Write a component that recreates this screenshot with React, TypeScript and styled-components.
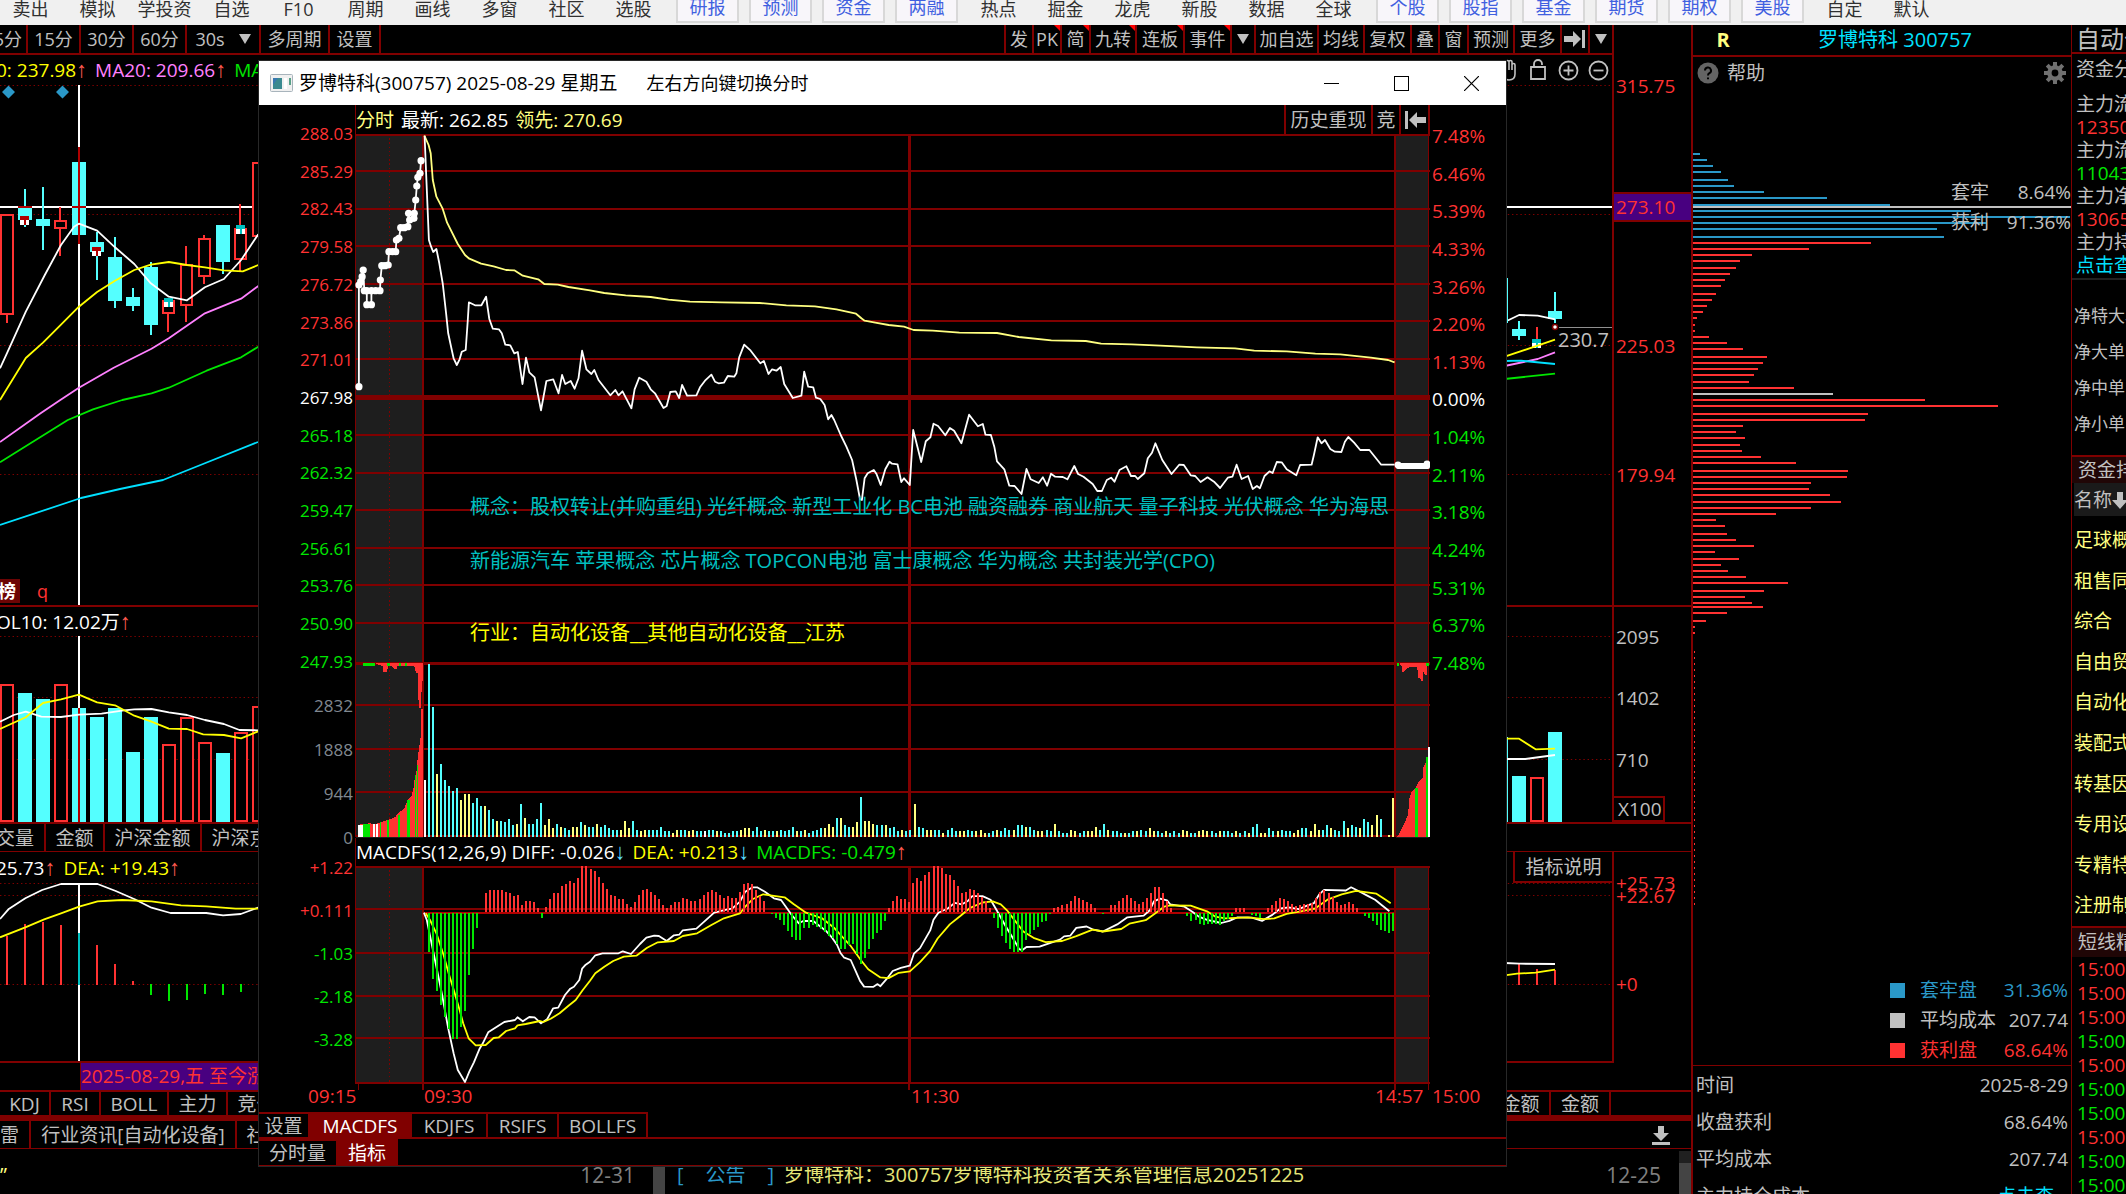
import React from "react";
import styled, { createGlobalStyle, css } from "styled-components";

const LINE = "#800000";
const RED = "#ff3232";
const GREEN = "#00e600";
const CYAN = "#54ffff";
const GRAY = "#c0c0c0";
const BLUE = "#2a98c8";
const CREAM = "#ffff80";

const Global = createGlobalStyle`
  * { box-sizing: border-box; }
  html, body, #root { height: 100%; margin: 0; }
  body {
    background: #000;
    color: ${GRAY};
    overflow: hidden;
    font: 18px/24px "Open Sans", "Noto Sans CJK SC", sans-serif;
  }
  button { font: inherit; color: inherit; background: none; border: 0; padding: 0; margin: 0; white-space: nowrap; }
  svg { display: block; }
`;

/* ---------- geometry helpers ---------- */

type Frame = { x: number; y: number; kx: number; ky: number };
type Rect = { x: number; y: number; w: number; h: number };

const parse = (s: string) => s.trim().split(/\s+/).map((p) => p.split(",").map(Number));
const px = (f: Frame, x: number) => f.x + x * f.kx;
const py = (f: Frame, y: number) => f.y + y * f.ky;
const place = (f: Frame, s: string) =>
  parse(s).map(([x, y]) => `${px(f, x).toFixed(1)},${py(f, y).toFixed(1)}`).join(" ");

const THIRD = 1 / 3;
const daily: Frame = { x: 0, y: 0, kx: 0.3444, ky: THIRD };
const dailyVol: Frame = { x: 0, y: 560, kx: 0.3444, ky: THIRD };
const dailyMacd: Frame = { x: 0, y: 840, kx: 0.4209, ky: THIRD };
const recent: Frame = { x: 1480, y: 0, kx: 0.412, ky: THIRD };
const recentVol: Frame = { x: 1480, y: 480, kx: 0.412, ky: THIRD };
const recentMacd: Frame = { x: 1480, y: 840, kx: 0.412, ky: THIRD };
const morning: Frame = { x: 340, y: 100, kx: 0.3571, ky: THIRD };
const afternoon: Frame = { x: 860, y: 300, kx: 0.3827, ky: THIRD };
const morningInd: Frame = { x: 340, y: 640, kx: 0.3571, ky: THIRD };
const afternoonInd: Frame = { x: 860, y: 640, kx: 0.4082, ky: 0.3533 };

/* ---------- intraday data ---------- */

const AUCTION =
  "53,860 53,555 58,545 62,530 65,510 68,572 75,572 75,614 88,614 88,572 100,572 112,572 113,540 117,497 126,497 135,495 137,455 147,455 156,455 158,420 165,415 170,383 180,383 190,380 192,340 195,360 207,355 208,340 212,300 215,258 218,232 224,220 227,182";
const PRICE_AM =
  "237,108 242,240 249,420 255,440 261,456 270,447 278,490 288,552 297,640 303,700 312,745 318,775 327,795 335,778 341,755 352,750 358,660 361,607 378,616 396,616 409,590 413,620 418,657 428,686 445,688 453,700 463,734 477,736 488,760 498,756 511,852 521,773 530,817 545,832 563,931 578,843 597,838 612,880 622,825 631,852 646,843 657,866 668,835 678,752 690,808 704,822 712,810 724,840 757,886 771,870 780,886 791,874 816,925 825,868 838,833 858,845 870,868 882,880 906,924 915,918 925,876 940,874 950,894 958,855 972,887 998,886 1008,862 1022,842 1040,824 1050,845 1060,850 1075,848 1086,828 1104,830 1110,820 1118,772 1132,734 1150,752 1177,790 1187,783 1200,822 1210,808 1222,812 1234,801 1244,852 1268,894 1292,887 1300,815 1311,860 1325,862 1333,893 1345,897 1357,915 1367,958 1376,945 1384,960 1402,1005 1418,1040 1434,1080 1446,1140 1456,1196";
const PRICE_PM =
  "0,598 5,600 12,535 20,520 36,510 43,522 54,555 66,508 77,485 84,491 98,493 108,546 115,535 130,555 139,390 150,440 160,486 172,424 184,412 192,371 204,378 223,406 235,384 246,392 265,430 285,344 308,379 321,372 328,404 342,405 351,440 358,484 377,508 390,557 404,558 422,582 435,507 446,538 467,549 478,532 489,557 499,521 510,530 530,531 542,538 560,498 570,522 584,530 608,552 620,573 632,573 645,540 656,533 665,545 678,510 696,499 708,528 719,528 726,537 743,520 752,475 763,458 772,430 790,480 814,522 834,494 846,495 864,526 876,528 890,546 908,532 925,545 941,564 961,533 973,530 984,494 997,537 1014,528 1026,567 1037,558 1045,565 1057,528 1070,514 1078,519 1089,486 1102,487 1115,508 1140,526 1150,495 1180,494 1186,465 1196,412 1206,430 1215,420 1229,447 1241,455 1258,456 1267,425 1276,411 1291,428 1307,450 1331,450 1362,494 1397,494";
const LEAD_AM =
  "236,106 248,135 254,160 260,240 270,290 287,325 300,368 330,432 350,465 362,476 395,491 430,499 465,510 488,511 512,527 555,538 572,552 610,554 640,561 700,571 740,579 800,586 870,591 920,599 980,605 1070,607 1175,609 1250,616 1330,619 1390,628 1445,641 1460,655";
const LEAD_PM =
  "0,52 12,62 40,68 75,75 115,80 140,90 190,92 260,98 358,99 415,111 500,121 590,123 630,131 710,133 785,137 880,142 980,145 1030,152 1115,154 1190,161 1255,163 1335,173 1380,180 1397,187";

const VOL_AM = [57, 173, 130, 63, 73, 57, 51, 46, 49, 37, 43, 43, 34, 39, 31, 31, 27, 18, 16, 16, 15, 18, 12, 13, 33, 19, 13, 13, 18, 34, 12, 18, 9, 13, 10, 9, 7, 10, 10, 15, 12, 10, 10, 13, 10, 12, 9, 7, 7, 7, 16, 9, 16, 7, 6, 7, 7, 7, 7, 10, 6, 6, 4, 7, 7, 7, 6, 7, 6, 6, 6, 7, 7, 6, 6, 4, 4, 6, 6, 7, 9, 9, 6, 10, 6, 7, 6, 6, 6, 7, 6, 7, 10, 6, 6, 7, 4, 6, 7, 9, 9, 13, 10, 19, 19, 12, 10, 10, 15, 40];
const VOL_PM = [16, 16, 13, 12, 12, 12, 9, 10, 6, 7, 6, 7, 33, 10, 9, 7, 7, 7, 7, 4, 7, 9, 6, 6, 6, 7, 6, 6, 7, 4, 4, 6, 7, 6, 9, 7, 7, 12, 12, 10, 10, 7, 6, 6, 7, 6, 13, 6, 4, 4, 7, 6, 4, 6, 6, 6, 10, 7, 13, 7, 6, 6, 4, 4, 4, 6, 6, 7, 6, 9, 6, 6, 4, 6, 4, 6, 4, 7, 6, 4, 4, 6, 7, 6, 6, 4, 6, 6, 6, 4, 6, 4, 6, 4, 10, 13, 4, 4, 9, 6, 6, 7, 6, 6, 4, 7, 9, 9, 6, 13, 7, 7, 12, 9, 7, 6, 16, 9, 12, 10, 9, 18, 15, 12, 22, 18, 0, 2, 39];
const TINT_AM = "wccyccccc" + "yyycccyccyccccyc" + "yccccyyycycc" + "yycyccycccccyyyccyyccccccyyccyycc";
const TINT_PM = "yyyccycccyccyccyyccycccyycc";

const MACD_AM = [0, -39, -66, -78, -92, -104, -116, -126, -126, -114, -98, -62, -36, -15, 0, 19, 22, 22, 22, 22, 20, 19, 16, 17, 7, 11, 11, 10, 4, -5, 5, 13, 19, 19, 26, 28, 31, 29, 34, 46, 46, 43, 41, 35, 29, 23, 17, 16, 13, 13, 8, 5, 10, 17, 22, 23, 20, 17, 13, 7, 4, 7, 10, 10, 14, 13, 11, 11, 13, 17, 20, 22, 20, 17, 14, 16, 14, 14, 20, 28, 29, 28, 22, 16, 11, 0, -1, -5, -7, -12, -18, -24, -27, -27, -15, -15, -12, -14, -16, -19, -23, -25, -31, -36, -36, -32, -31, -41, -51];
const MACD_PM = [-45, -36, -26, -20, -17, -8, 4, 11, 16, 13, 13, 10, 29, 34, 31, 37, 40, 46, 46, 44, 38, 37, 32, 26, 19, 20, 23, 22, 19, 15, 11, 4, -5, -15, -23, -30, -36, -39, -39, -39, -27, -21, -17, -14, -9, -8, -1, 4, 5, 7, 8, 11, 16, 14, 12, 10, 8, 4, 0, -1, 0, 7, 7, 11, 14, 17, 14, 11, 8, 10, 14, 19, 25, 25, 19, 11, 4, 0, 0, 0, -3, -8, -7, -11, -12, -11, -11, -11, -12, -8, -6, -3, 4, 4, 4, 0, -2, -3, -5, 0, 4, 7, 11, 14, 13, 11, 8, 6, 7, 8, 8, 9, 14, 20, 22, 19, 15, 10, 7, 8, 10, 8, 4, 0, -3, -5, -8, -12, -17, -18, -20, -18];

const DIFF_AM =
  "235,818 243,840 262,940 285,1060 303,1165 318,1240 330,1290 350,1326 362,1295 375,1267 390,1228 400,1210 415,1177 435,1163 460,1146 490,1140 497,1132 512,1144 530,1131 545,1132 563,1150 580,1138 597,1105 611,1103 630,1065 645,1046 655,1040 670,1020 678,986 688,974 700,965 715,946 735,940 780,940 792,934 815,942 840,912 858,893 880,887 893,888 915,903 935,886 950,884 960,871 998,866 1020,845 1048,818 1085,808 1098,806 1120,785 1135,755 1155,742 1168,742 1190,755 1215,775 1235,780 1245,795 1265,825 1285,850 1297,843 1325,843 1360,872 1378,893 1392,915 1402,940 1412,953 1430,960 1442,988 1456,1022";
const DIFF_PM =
  "0,965 10,981 32,982 43,974 50,980 65,960 80,937 100,928 122,922 132,888 147,872 172,822 180,792 192,772 215,760 232,744 250,748 265,738 275,725 300,725 320,735 335,765 357,810 375,845 390,875 397,878 408,869 440,868 465,858 490,848 500,839 515,837 530,815 555,811 572,820 595,825 630,805 655,785 695,780 710,765 720,740 735,732 752,737 760,748 795,755 815,770 830,783 850,792 885,801 905,795 925,785 960,786 985,795 1010,778 1030,760 1050,757 1075,762 1095,752 1112,745 1125,720 1137,707 1190,709 1203,700 1220,710 1245,725 1262,735 1280,752 1297,768";
const DEA_AM =
  "240,820 252,840 270,880 290,945 305,1003 320,1055 335,1110 345,1150 360,1195 380,1216 408,1215 430,1194 445,1192 465,1173 490,1165 497,1156 520,1152 560,1143 570,1146 590,1136 615,1120 640,1097 660,1080 680,1050 700,1022 715,1000 740,980 765,963 795,950 830,947 860,923 890,907 935,903 960,888 1000,880 1040,855 1075,835 1120,820 1135,800 1155,778 1185,763 1245,772 1270,792 1305,818 1350,835 1385,865 1430,918 1456,956";
const DEA_PM =
  "0,903 20,932 50,955 70,957 95,942 122,938 147,912 172,880 190,845 220,805 245,782 270,758 300,743 325,740 345,748 360,765 380,795 400,825 425,843 455,855 495,852 530,838 570,820 595,825 640,818 660,803 700,793 722,775 745,755 760,751 810,752 850,768 870,783 895,788 950,785 990,790 1015,788 1045,775 1080,768 1115,760 1145,735 1180,720 1215,710 1265,718 1285,733 1300,745";

const PRICES = ["288.03", "285.29", "282.43", "279.58", "276.72", "273.86", "271.01", "267.98", "265.18", "262.32", "259.47", "256.61", "253.76", "250.90", "247.93"];
const PERCENTS = ["7.48%", "6.46%", "5.39%", "4.33%", "3.26%", "2.20%", "1.13%", "0.00%", "1.04%", "2.11%", "3.18%", "4.24%", "5.31%", "6.37%", "7.48%"];
const tone = (i: number) => (i < 7 ? RED : i === 7 ? "#ffffff" : GREEN);

const spread = (n: number, from: number, to: number) => (i: number) => Math.round(from + ((to - from) * i) / (n - 1));
const amX = (n: number) => spread(n, 424, 860);
const pmX = (n: number) => spread(n, 864, 1392);
const tints: Record<string, string> = { w: "#ffffff", c: CYAN, y: CREAM };

/* ---------- drawing primitives ---------- */

const Canvas = styled.svg`
  width: 100%;
  height: 100%;
  min-height: 0;
`;

const Trace = styled.polyline`
  fill: none;
  stroke: ${(p) => p.color};
  stroke-width: 1.8;
  stroke-linejoin: round;
`;

const box = (r: Rect) => `${r.x} ${r.y} ${r.w} ${r.h}`;

const Chart = ({ view, label, children }: { view: Rect; label: string; children: React.ReactNode }) => (
  <Canvas viewBox={box(view)} preserveAspectRatio="none" role="img" aria-label={label}>
    {children}
  </Canvas>
);

const Rule = ({ y, x1, x2, w = 2, c = LINE }: { y: number; x1: number; x2: number; w?: number; c?: string }) => (
  <rect x={x1} y={y} width={x2 - x1} height={w} fill={c} />
);
const Post = ({ x, y1, y2, w = 2, c = LINE }: { x: number; y1: number; y2: number; w?: number; c?: string }) => (
  <rect x={x} y={y1} width={w} height={y2 - y1} fill={c} />
);
const Dots = ({ d }: { d: string }) => (
  <path d={d} stroke="#800000" strokeWidth="1" strokeDasharray="1.4 2.8" fill="none" />
);

const Session = ({ top, bottom }: { top: number; bottom: number }) => (
  <>
    <rect x="356" y={top} width="67" height={bottom - top} fill="#1e1e1e" />
    <rect x="1396" y={top} width="33" height={bottom - top} fill="#1e1e1e" />
    <Dots d={`M389.5 ${top}V${bottom}`} />
  </>
);
const Posts = ({ top, bottom }: { top: number; bottom: number }) => (
  <>
    <Post x={355} y1={top} y2={bottom} w={1} />
    <Post x={422} y1={top} y2={bottom} />
    <Post x={908} y1={top} y2={bottom} w={3} />
    <Post x={1394} y1={top} y2={bottom} />
    <Post x={1428} y1={top} y2={bottom} w={1} />
  </>
);

const PriceChart = () => (
  <Chart view={{ x: 355, y: 134, w: 1075, h: 528 }} label="分时价格">
    <g shapeRendering="crispEdges">
      <Session top={134} bottom={662} />
      {[134, 170, 208, 245, 283, 320, 358, 434, 472, 509, 547, 584, 622].map((y) => (
        <Rule key={y} y={y} x1={355} x2={1431} />
      ))}
      <Rule y={395} x1={355} x2={1431} w={5} />
      <Posts top={134} bottom={662} />
    </g>
    <Trace color="#ffffff" points={place(morning, AUCTION)} />
    {parse(AUCTION).map(([x, y], i) => (
      <circle key={i} cx={px(morning, x)} cy={py(morning, y)} r="3.6" fill="#fff" />
    ))}
    <Trace color={CREAM} points={place(morning, LEAD_AM) + " " + place(afternoon, LEAD_PM)} />
    <Trace color="#ffffff" points={place(morning, PRICE_AM) + " " + place(afternoon, PRICE_PM)} />
    <rect x="1396" y="463" width="34" height="6" rx="2" fill="#fff" />
    <circle cx="1427" cy="464" r="3.4" fill="#fff" />
    <circle cx="1398" cy="465" r="3.4" fill="#fff" />
  </Chart>
);

const VolumeChart = () => {
  const am = amX(VOL_AM.length);
  const pm = pmX(VOL_PM.length);
  return (
    <Chart view={{ x: 355, y: 662, w: 1075, h: 176 }} label="分时成交量">
      <g shapeRendering="crispEdges">
        <Session top={662} bottom={838} />
        {[704, 748, 791, 835].map((y) => (
          <Rule key={y} y={y} x1={355} x2={1430} />
        ))}
        <Rule y={662} x1={355} x2={1430} w={3} />
        <Posts top={662} bottom={836} />
        {VOL_AM.map((h, i) => (
          <rect key={i} x={am(i)} y={837 - h} width="2" height={h} fill={tints[TINT_AM[i % TINT_AM.length]]} />
        ))}
        {VOL_PM.map((h, i) => (
          <rect key={i} x={pm(i)} y={837 - h} width="2" height={h} fill={i === 12 || i > 127 ? CREAM : tints[TINT_PM[i % TINT_PM.length]]} />
        ))}
        <polygon
          fill={RED}
          points={place(morningInd, "50,590 50,555 64,552 85,550 95,553 107,550 120,545 140,538 155,530 165,518 180,505 190,480 200,468 205,450 210,410 215,390 218,348 222,320 226,290 228,207 232,207 232,590")}
        />
        <rect x="358" y="825" width="5" height="12" fill="#fff" />
        <rect x="363" y="824" width="7" height="13" fill={GREEN} />
        <rect x="373" y="824" width="2" height="13" fill="#fff" />
        <rect x="376" y="824" width="2" height="13" fill="#fff" />
        <rect x="380" y="822" width="1" height="15" fill={GREEN} />
        <rect x="387" y="820" width="2" height="17" fill={GREEN} />
        <rect x="398" y="815" width="2" height="22" fill={GREEN} />
        <rect x="407" y="800" width="3" height="37" fill={GREEN} />
        <rect x="415" y="775" width="1" height="62" fill={GREEN} />
        <rect x="417" y="765" width="1" height="72" fill={GREEN} />
        <rect x="363" y="663" width="12" height="3" fill={GREEN} />
        <polygon
          fill={RED}
          points={place(morningInd, "98,70 120,78 120,95 132,97 134,78 148,80 152,88 158,88 160,78 208,78 213,98 218,100 220,190 222,205 227,205 229,122 233,122 233,70")}
        />
        <rect x="387" y="663" width="3" height="3" fill={GREEN} />
        <rect x="399" y="663" width="2" height="3" fill={GREEN} />
        <rect x="405" y="663" width="2" height="3" fill={GREEN} />
        <polygon
          fill={RED}
          points={place(afternoonInd, "1316,557 1325,540 1335,515 1343,495 1345,450 1352,428 1360,420 1368,402 1378,392 1380,360 1386,345 1391,330 1394,330 1394,557")}
        />
        <rect x="1415" y="788" width="3" height="49" fill={GREEN} />
        <rect x="1426" y="757" width="2" height="80" fill={GREEN} />
        <rect x="1428" y="747" width="2" height="90" fill="#fff" />
        <rect x="1397" y="663" width="2" height="3" fill={GREEN} />
        <polygon
          fill={RED}
          points={place(afternoonInd, "1322,66 1328,76 1329,92 1335,86 1342,78 1365,75 1368,108 1374,110 1376,116 1379,114 1380,88 1384,98 1388,98 1388,66")}
        />
        <rect x="1426" y="663" width="3" height="3" fill={GREEN} />
      </g>
    </Chart>
  );
};

const MacdBars = ({ data, at }: { data: number[]; at: (i: number) => number }) => (
  <>
    {data.map((v, i) => (
      <rect key={i} x={at(i)} y={v > 0 ? 912 - v : 913} width="2" height={v > 0 ? v : -v} fill={v > 0 ? RED : GREEN} />
    ))}
  </>
);

const MacdChart = () => (
  <Chart view={{ x: 355, y: 866, w: 1075, h: 226 }} label="MACDFS">
    <g shapeRendering="crispEdges">
      <Session top={866} bottom={1084} />
      {[866, 908, 952, 995, 1037, 1082].map((y) => (
        <Rule key={y} y={y} x1={355} x2={1430} />
      ))}
      <Rule y={912} x1={423} x2={1394} c="#b00000" />
      <Posts top={866} bottom={1084} />
      <Post x={358} y1={1084} y2={1090} w={1} />
      <Post x={422} y1={1084} y2={1090} />
      <Post x={908} y1={1084} y2={1090} />
      <Post x={1394} y1={1084} y2={1090} />
      <Post x={1428} y1={1084} y2={1090} w={1} />
    </g>
    <Trace color="#ffffff" points={place(morningInd, DIFF_AM) + " " + place(afternoonInd, DIFF_PM)} />
    <Trace color="#ffff00" points={place(morningInd, DEA_AM) + " " + place(afternoonInd, DEA_PM)} />
    <g shapeRendering="crispEdges">
      <MacdBars data={MACD_AM} at={amX(MACD_AM.length)} />
      <MacdBars data={MACD_PM} at={pmX(MACD_PM.length)} />
    </g>
  </Chart>
);

/* ---------- daily chart ---------- */

// left, right, body top, body bottom, wick top, wick bottom, rising
type Candle = [number, number, number, number, number, number, boolean];
const CANDLES: Candle[] = [
  [0, 40, 641, 945, 641, 968, true],
  [52, 93, 620, 660, 567, 680, false],
  [105, 145, 657, 678, 561, 750, false],
  [158, 197, 659, 686, 620, 768, true],
  [209, 250, 486, 705, 486, 705, false],
  [261, 302, 726, 756, 697, 840, false],
  [314, 354, 771, 903, 711, 924, false],
  [366, 407, 891, 918, 864, 933, false],
  [418, 459, 801, 975, 786, 1005, false],
  [471, 510, 900, 943, 900, 996, true],
  [524, 562, 792, 919, 738, 966, true],
  [576, 615, 713, 829, 705, 852, true],
  [627, 668, 675, 786, 675, 822, false],
  [680, 719, 684, 781, 612, 815, true],
  [733, 770, 486, 712, 486, 712, true],
];
const RECENT: Candle[] = [
  [78, 112, 987, 1008, 963, 1020, false],
  [128, 148, 1018, 1030, 981, 1018, true],
  [165, 199, 932, 957, 875, 970, false],
];
const VOLUMES: [number, number, number, boolean][] = [
  [0, 40, 371, true], [52, 93, 399, false], [105, 145, 417, false], [158, 197, 373, true], [209, 250, 444, false],
  [261, 302, 471, false], [314, 354, 444, false], [366, 407, 576, false], [418, 459, 471, false], [471, 510, 553, true],
  [524, 562, 470, true], [576, 615, 545, true], [627, 668, 579, false], [680, 719, 515, true], [733, 770, 437, true],
];
const RECENT_VOLUMES: [number, number, number, boolean][] = [[78, 112, 888, false], [121, 155, 890, true], [165, 199, 756, false]];

const Body = ({ x, y, w, h, up }: { x: number; y: number; w: number; h: number; up: boolean }) =>
  up ? (
    <rect x={x + 1} y={y + 1} width={w - 2} height={Math.max(h - 2, 1)} fill="#000" stroke={RED} strokeWidth="2" />
  ) : (
    <rect x={x} y={y} width={w} height={h} fill={CYAN} />
  );

const Candles = ({ f, data }: { f: Frame; data: Candle[] }) => (
  <g shapeRendering="crispEdges">
    {data.map(([l, r, t, b, wt, wb, up], i) => {
      const x = Math.round(px(f, l));
      const w = Math.round((r - l) * f.kx);
      return (
        <g key={i}>
          <rect x={x + Math.floor(w / 2) - 1} y={py(f, wt)} width="2" height={(wb - wt) * f.ky} fill={up ? RED : CYAN} />
          <Body x={x} y={Math.round(py(f, t))} w={w} h={Math.round((b - t) * f.ky)} up={up} />
        </g>
      );
    })}
  </g>
);

const Flag = ({ x, y, c }: { x: number; y: number; c: string }) => (
  <g shapeRendering="crispEdges">
    <rect x={x} y={y} width="9" height="9" fill="#fff" />
    <rect x={x} y={y} width="9" height="4" fill={c} />
    <rect x={x + 4} y={y + 3} width="2" height="6" fill={c} />
  </g>
);

const DailyPrice = () => (
  <Chart view={{ x: 0, y: 85, w: 1612, h: 520 }} label="日线">
    <Dots d="M0 85.5H1612M0 214.5H1612M0 345.5H1612M0 474.5H1612" />
    <path d="M8.5 85.5L15 92L8.5 98.5L2 92ZM62.5 85.5L69 92L62.5 98.5L56 92Z" fill={BLUE} />
    <rect x="78" y="85" width="2" height="520" fill="#fff" />
    <rect x="0" y="206" width="1612" height="2" fill="#fff" />
    <Candles f={daily} data={CANDLES} />
    <rect x="78" y="147" width="2" height="97" fill="#b00000" />
    <rect x="72" y="206" width="14" height="2" fill="#b00000" />
    <rect x="18" y="206" width="14" height="2" fill="#b00000" />
    <Flag x={20} y={216} c="#b00000" />
    <Flag x={92} y={247} c="#b00000" />
    <Flag x={164} y={298} c="#00c0c0" />
    <Flag x={236} y={225} c="#00c0c0" />
    <Trace color="#ffffff" points={place(daily, "0,1105 20,1060 75,935 130,825 177,735 215,680 229,671 282,692 334,742 390,792 438,850 490,890 543,901 595,862 650,837 700,780 750,703")} />
    <Trace color="#ffff00" points={place(daily, "0,1200 75,1074 125,1028 177,974 229,920 282,876 334,842 390,810 438,794 490,786 543,795 595,802 650,811 705,814 750,795")} />
    <Trace color="#ff80ff" points={place(daily, "0,1326 118,1240 175,1200 229,1163 330,1103 440,1046 490,1015 595,940 700,896 750,858")} />
    <Trace color={GREEN} points={place(daily, "0,1387 197,1260 270,1228 355,1200 440,1180 490,1163 600,1112 700,1072 750,1040")} />
    <Trace color="#00e0ff" points="0,525 81,498 120,489 163,480 203,464 258,442" />
    <Candles f={recent} data={RECENT} />
    <Flag x={1532} y={339} c="#00c0c0" />
    <Trace color="#ffffff" points={place(recent, "50,970 66,962 95,945 140,947 182,958")} />
    <Trace color="#ffff00" points={place(recent, "60,1070 182,1019")} />
    <Trace color="#ff80ff" points={place(recent, "60,1098 140,1077 182,1057")} />
    <Trace color="#00e0ff" points={place(recent, "60,1083 100,1082 182,1092")} />
    <Trace color={GREEN} points={place(recent, "60,1137 182,1121")} />
    <circle cx="1555" cy="327" r="2.5" fill="#fff" stroke={LINE} strokeWidth="1.5" />
    <rect x="1559" y="327" width="53" height="1" fill="#909090" />
    <rect x="1506" y="278" width="2" height="45" fill={CYAN} />
  </Chart>
);

const DailyVolume = () => (
  <Chart view={{ x: 0, y: 636, w: 1612, h: 186 }} label="成交量">
    <Dots d="M0 636.5H1612M0 697.5H1612M0 759.5H1612" />
    <rect x="78" y="636" width="2" height="72" fill="#fff" />
    <g shapeRendering="crispEdges">
      {VOLUMES.map(([l, , t, up], i) => (
        <Body key={i} x={Math.round(px(dailyVol, l))} y={Math.round(py(dailyVol, t))} w={14} h={822 - Math.round(py(dailyVol, t))} up={up} />
      ))}
      {RECENT_VOLUMES.map(([l, , t, up], i) => (
        <Body key={i} x={Math.round(px(recentVol, l))} y={Math.round(py(recentVol, t))} w={14} h={822 - Math.round(py(recentVol, t))} up={up} />
      ))}
      <rect x="1506" y="737" width="2" height="85" fill={CYAN} />
      <rect x="78" y="708" width="2" height="114" fill="#b00000" />
    </g>
    <Trace color="#ffffff" points={place(dailyVol, "0,485 40,465 75,455 120,470 177,471 229,464 295,461 360,451 390,448 440,447 490,457 543,465 595,480 650,492 695,510 750,511")} />
    <Trace color="#ffff00" points={place(dailyVol, "0,507 75,472 125,429 177,418 229,404 282,427 334,436 390,467 438,484 490,506 543,507 590,523 650,525 700,535 750,514")} />
    <Trace color="#ffffff" points={place(recentVol, "60,837 110,837 182,825")} />
    <Trace color="#ffff00" points={place(recentVol, "60,776 95,776 135,808 182,806")} />
  </Chart>
);

const RED_STEMS = [[17, 287], [60, 252], [103, 246], [145, 255], [230, 316], [273, 372], [316, 423]];
const GREEN_STEMS = [[358, 465], [402, 483], [444, 480], [487, 461], [530, 464], [572, 456]];

const DailyMacd = () => (
  <Chart view={{ x: 0, y: 883, w: 1612, h: 178 }} label="MACD">
    <Dots d="M0 883.5H1612M0 895.5H1612M0 984.5H1612" />
    <g shapeRendering="crispEdges">
      {RED_STEMS.map(([x, t]) => (
        <rect key={x} x={Math.round(px(dailyMacd, x)) - 1} y={py(dailyMacd, t)} width="2" height={(434 - t) / 3} fill={RED} />
      ))}
      {GREEN_STEMS.map(([x, b]) => (
        <rect key={x} x={Math.round(px(dailyMacd, x)) - 1} y="984" width="2" height={(b - 432) / 3} fill={GREEN} />
      ))}
      <rect x="78" y="883" width="2" height="178" fill="#fff" />
      <rect x="78" y="933" width="2" height="52" fill="#00c0c0" />
      <rect x="1518" y="963" width="2" height="22" fill={RED} />
      <rect x="1536" y="969" width="2" height="16" fill={RED} />
      <rect x="1554" y="970" width="2" height="15" fill={RED} />
    </g>
    <Trace color="#ffffff" points={place(dailyMacd, "0,237 20,208 60,175 100,150 145,132 232,132 275,153 320,178 360,203 405,219 490,219 530,226 572,222 615,202")} />
    <Trace color="#ffff00" points={place(dailyMacd, "0,292 60,262 105,238 145,220 188,200 232,184 290,180 360,184 430,196 490,199 560,206 615,206")} />
    <Trace color="#ffffff" points={place(recentMacd, "60,369 95,371 182,372")} />
    <Trace color="#ffff00" points={place(recentMacd, "60,406 90,401 135,398 182,389")} />
  </Chart>
);

/* ---------- page shell ---------- */

const Shell = styled.div`
  position: relative;
  display: flex;
  flex-direction: column;
  height: 100vh;
  overflow: hidden;
`;

const MenuBar = styled.nav`
  display: flex;
  flex: none;
  height: 25px;
  overflow: hidden;
  background: #f0f0f0;
  color: #303030;
  line-height: 19px;
`;
const MenuItem = styled.button`
  flex: none;
  width: 67px;
  height: 19px;
  &:first-child { margin-left: -3px; }
`;
const ChipGroup = styled.div`
  display: flex;
  margin: 0 2px 0 4px;
`;
const MenuChip = styled.button`
  flex: none;
  width: 63px;
  height: 23px;
  margin: 0 5px;
  padding-bottom: 7px;
  border: 2px solid #d8d8d8;
  border-top: 0;
  background: #f8f6fa;
  color: #4060e0;
  line-height: 14px;
`;

const Desk = styled.div`
  display: flex;
  flex: 1;
  min-height: 0;
`;

const Main = styled.main`
  display: grid;
  flex: 1;
  min-width: 0;
  grid-template-columns: minmax(0, 1fr) 77px;
  grid-template-rows: 30px 30px 520fr 31px 186fr 30px 31px 178fr 29px 29px 30px 45px;
`;

const ToolRow = styled.div`
  display: flex;
  justify-content: space-between;
  border-bottom: 2px solid ${LINE};
`;
const ToolGroup = styled.div`
  display: flex;
`;
const Tool = styled.button<{ $w: number; $hot?: boolean }>`
  position: relative;
  display: flex;
  align-items: center;
  justify-content: center;
  gap: 14px;
  width: ${(p) => p.$w}px;
  overflow: hidden;
  border-right: 2px solid ${LINE};
  ${(p) =>
    p.$hot &&
    css`
      &::after {
        content: "";
        position: absolute;
        top: 0;
        right: 0;
        border: 3px solid transparent;
        border-top-color: #f00;
        border-right-color: #f00;
      }
    `}
`;
const FirstTool = styled(Tool)`
  justify-content: flex-end;
  padding-right: 4px;
`;
const RightTools = styled(ToolGroup)`
  border-left: 2px solid ${LINE};
`;

const InfoRow = styled.div<{ $top?: boolean; $edge?: boolean }>`
  display: flex;
  align-items: center;
  gap: 8px;
  overflow: hidden;
  font-size: 19px;
  white-space: nowrap;
  border-top: ${(p) => (p.$top ? `2px solid ${LINE}` : 0)};
  border-right: ${(p) => (p.$edge ? `2px solid ${LINE}` : 0)};
  > span:first-child { margin-left: -4px; }
`;
const Ink = styled.span<{ $c: string }>`
  color: ${(p) => p.$c};
`;
const ArrowGlyph = styled.span<{ $up: boolean }>`
  font: 22px/20px "Liberation Sans", sans-serif;
  color: ${(p) => (p.$up ? "#ff5a50" : "#5adcff")};
`;
const Arrow = ({ up = true }: { up?: boolean }) => <ArrowGlyph $up={up}>{up ? "↑" : "↓"}</ArrowGlyph>;

const ChartTools = styled.div`
  display: flex;
  align-items: center;
  gap: 10px;
  margin-left: auto;
  padding-right: 4px;
`;
const IconButton = styled.button`
  display: grid;
  place-items: center;
  width: 20px;
  height: 24px;
`;

const Pane = styled.div`
  position: relative;
  min-width: 0;
  min-height: 0;
  overflow: hidden;
  border-right: 2px solid ${LINE};
  display: flex;
`;
const LastPrice = styled.span`
  position: absolute;
  top: 243px;
  right: 0;
  width: 54px;
  overflow: hidden;
  font-size: 20px;
`;
const Badges = styled.div`
  position: absolute;
  left: 0;
  bottom: 2px;
  display: flex;
  align-items: center;
  gap: 17px;
  color: ${RED};
`;
const Badge = styled.span`
  width: 20px;
  overflow: hidden;
  background: #6c0404;
  color: #fff;
  font-weight: 700;
  text-indent: -2px;
`;

const Axis = styled.div`
  display: flex;
  flex-direction: column;
  min-height: 0;
  padding-left: 2px;
  font-size: 19px;
`;
const PriceAxis = styled(Axis)`
  margin-top: -11px;
  color: ${RED};
`;
const AxisStep = styled.div<{ $h: number }>`
  height: ${(p) => p.$h}px;
`;
const PriceTag = styled.div`
  margin: -12px 0 0 -2px;
  padding: 1px 2px;
  border: solid ${LINE};
  border-width: 2px 0;
  background: #480080;
`;
const VolAxis = styled(Axis)`
  margin-top: -11px;
`;
const Unit = styled.span`
  align-self: flex-start;
  margin: auto 0 0 -4px;
  padding: 0 1px 0 4px;
  border: 2px solid ${LINE};
  line-height: 22px;
`;
const MacdAxis = styled(Axis)`
  margin-top: -6px;
  color: ${RED};
  line-height: 13px;
`;

const TabRow = styled.div<{ $wide?: boolean; $heavy?: boolean }>`
  display: flex;
  min-width: 0;
  border-top: 2px solid ${LINE};
  border-bottom: ${(p) => (p.$heavy ? 4 : 1)}px solid ${LINE};
  font-size: 19px;
  ${(p) => p.$wide && "grid-column: 1 / -1;"}
`;
const Tab = styled.button<{ $w: number }>`
  display: flex;
  align-items: center;
  justify-content: center;
  flex: none;
  width: ${(p) => p.$w}px;
  overflow: hidden;
  border-right: 2px solid ${LINE};
`;
const FirstTab = styled(Tab)`
  justify-content: flex-end;
  padding-right: 10px;
`;
const TabTail = styled.div`
  display: flex;
  margin-left: auto;
  margin-right: 80px;
  border-left: 2px solid ${LINE};
`;
const Download = styled(IconButton)`
  margin: 2px 20px 0 auto;
`;
const Explain = styled.button`
  width: 99px;
  height: 31px;
  margin-left: auto;
  border: 2px solid ${LINE};
  border-top: 0;
  border-right: 0;
`;
const DateRow = styled.div`
  display: flex;
  border-top: 2px solid ${LINE};
  padding-left: 80px;
`;
const DateTag = styled.div`
  flex: 1;
  background: #480080;
  color: ${RED};
  font-size: 19px;
  line-height: 26px;
  border-left: 1px solid ${LINE};
`;
const DateMask = styled.div`
  flex: 6;
  background: #000;
`;

const News = styled.div`
  grid-column: 1 / -1;
  display: flex;
  font-size: 20px;
`;
const NewsList = styled.div<{ $w?: number }>`
  display: flex;
  align-items: center;
  flex: ${(p) => (p.$w ? `0 0 ${p.$w}px` : "1")};
  gap: 10px;
  padding: 6px 18px 0 0;
  overflow: hidden;
  height: 45px;
  color: ${CREAM};
  white-space: nowrap;
`;
const NewsKind = styled.span`
  display: flex;
  gap: 22px;
  padding-left: 12px;
  color: ${BLUE};
`;
const NewsDate = styled.span`
  margin-left: auto;
  color: #808080;
  font-size: 21px;
`;
const ScrollBar = styled.div`
  flex: none;
  width: 12px;
  height: 45px;
  margin: 2px 0 0 0;
  border-top: 12px solid #202020;
  background: #444;
`;
const NewsLink = styled.a`
  color: #e6e678;
  text-decoration: none;
`;

/* ---------- chip distribution ---------- */

const Chips = styled.aside`
  display: flex;
  flex-direction: column;
  flex: 0 0 381px;
  border-left: 2px solid ${LINE};
  border-right: 1px solid ${LINE};
  font-size: 19px;
`;
const ChipsHead = styled.header`
  display: grid;
  grid-template-columns: 60px 1fr 34px;
  place-items: center;
  height: 32px;
  border-bottom: 2px solid ${LINE};
  color: #00e0ff;
  font-size: 20px;
`;
const Mark = styled.b`
  color: ${CREAM};
`;
const HelpRow = styled.div`
  display: flex;
  align-items: center;
  gap: 8px;
  height: 32px;
  padding: 0 5px 0 4px;
`;
const Help = styled.button`
  display: flex;
  align-items: center;
  gap: 8px;
`;
const Gear = styled.button`
  margin-left: auto;
`;
const ChipPlot = styled.div`
  position: relative;
  flex: 1;
  min-height: 0;
`;
const ChipStats = styled.dl`
  position: absolute;
  top: 91px;
  right: 0;
  width: 120px;
  margin: 0;
  display: grid;
  grid-template-columns: 1fr auto;
  row-gap: 6px;
  dt, dd { margin: 0; }
  dd { text-align: right; }
`;
const Legend = styled.ul`
  position: absolute;
  right: 3px;
  bottom: 0;
  width: 178px;
  margin: 0;
  padding: 0;
  list-style: none;
`;
const LegendRow = styled.li<{ $c: string }>`
  display: flex;
  align-items: center;
  justify-content: space-between;
  height: 30px;
  color: ${(p) => p.$c};
  &::before {
    content: "";
    width: 15px;
    height: 15px;
    margin-right: 15px;
    background: ${(p) => p.$c};
  }
  span:first-child { flex: 1; }
`;
const Facts = styled.table`
  flex: none;
  width: 100%;
  height: 129px;
  border-top: 1px solid ${LINE};
  border-spacing: 0;
  display: block;
  overflow: hidden;
  tbody { display: block; }
  tr { display: flex; justify-content: space-between; height: 37px; align-items: center; padding: 0 3px; }
  th, td { padding: 0; font-weight: 400; }
`;
const FactLink = styled.a`
  color: #00e0ff;
  padding-right: 14px;
`;

const BLUE_CHIPS = "462,534 480,551 498,566 516,585 540,602 558,617 576,689 594,842 615,995 633,1192 651,1432 669,1228 687,1109 711,1126";
const RED_CHIPS =
  "729,949 747,799 765,660 783,631 804,621 822,607 840,595 858,585 882,573 900,563 918,551 936,541 954,527 975,522 993,522 1011,556 1029,600 1047,638 1071,697 1089,687 1107,675 1125,665 1146,653 1164,762 1200,1080 1218,1257 1242,942 1260,934 1278,638 1296,621 1314,643 1335,631 1353,636 1371,682 1389,767 1413,893 1431,891 1449,803 1467,799 1485,850 1506,876 1524,803 1542,718 1560,573 1578,595 1602,600 1620,621 1638,665 1656,570 1677,629 1695,585 1713,602 1731,646 1749,748 1773,689 1791,643 1809,660 1821,687 1839,600 1863,549 1881,522 1899,522";

const ChipBars = ({ data, c }: { data: string; c: string }) => (
  <>
    {parse(data).map(([y, end]) => (
      <rect key={y} x="1693" y={Math.round(y / 3) - 1} width={Math.round((end - 517) * 0.412)} height="2" fill={c} />
    ))}
  </>
);

const FACTS: [string, string][] = [["时间", "2025-8-29"], ["收盘获利", "68.64%"], ["平均成本", "207.74"]];

const ChipPanel = () => (
  <Chips>
    <ChipsHead>
      <Mark>R</Mark>
      <span>罗博特科 300757</span>
    </ChipsHead>
    <HelpRow>
      <Help>
        <svg width="22" height="22" viewBox="0 0 22 22">
          <circle cx="11" cy="11" r="10.5" fill="#646464" />
          <path d="M8 8.6a3 3 0 1 1 4.4 2.6c-1 .6-1.4 1-1.4 2.2M11 15.4v1.8" stroke="#000" strokeWidth="2" fill="none" />
        </svg>
        帮助
      </Help>
      <Gear aria-label="设置">
        <svg width="22" height="22" viewBox="0 0 22 22">
          <circle cx="11" cy="11" r="5.6" fill="none" stroke="#707070" strokeWidth="4.4" />
          <path d="M11 0v4M11 18v4M0 11h4M18 11h4M3.2 3.2L6 6M16 16l2.8 2.8M3.2 18.8L6 16M16 6l2.8-2.8" stroke="#707070" strokeWidth="4" />
        </svg>
      </Gear>
    </HelpRow>
    <ChipPlot>
      <Chart view={{ x: 1693, y: 89, w: 378, h: 976 }} label="筹码分布">
        <g shapeRendering="crispEdges">
          <ChipBars data={BLUE_CHIPS} c={BLUE} />
          <ChipBars data={RED_CHIPS} c={RED} />
          <rect x="1693" y="206" width="378" height="2" fill={GRAY} />
          <rect x="1693" y="393" width="140" height="2" fill={GRAY} />
          <path d="M1694.5 651V905" stroke={RED} strokeWidth="1" strokeDasharray="2 4" />
        </g>
      </Chart>
      <ChipStats>
        <dt>套牢</dt>
        <dd>8.64%</dd>
        <dt>获利</dt>
        <dd>91.36%</dd>
      </ChipStats>
      <Legend>
        <LegendRow $c={BLUE}><span>套牢盘</span><span>31.36%</span></LegendRow>
        <LegendRow $c={GRAY}><span>平均成本</span><span>207.74</span></LegendRow>
        <LegendRow $c={RED}><span>获利盘</span><span>68.64%</span></LegendRow>
      </Legend>
    </ChipPlot>
    <Facts>
      <tbody>
        {FACTS.map(([k, v]) => (
          <tr key={k}><th scope="row">{k}</th><td>{v}</td></tr>
        ))}
        <tr><th scope="row">主力持仓成本</th><td><FactLink href="#cost">点击查</FactLink></td></tr>
      </tbody>
    </Facts>
  </Chips>
);

/* ---------- side column ---------- */

const Side = styled.aside`
  flex: 0 0 54px;
  overflow: hidden;
  padding-left: 2px;
  white-space: nowrap;
  font-size: 19px;
`;
const SideTitle = styled.h2`
  height: 29px;
  margin: 0 0 0 -2px;
  padding-left: 4px;
  border-bottom: 2px solid ${LINE};
  font-weight: 400;
  font-size: 24px;
  line-height: 27px;
`;
const Lines = styled.div<{ $h: number; $c?: string }>`
  line-height: ${(p) => p.$h}px;
  color: ${(p) => p.$c ?? "inherit"};
`;
const Flow = styled(Lines)`
  padding: 4px 0 1px 4px;
  margin-left: -2px;
  border-bottom: 2px solid #202020;
`;
const FlowHead = styled.div`
  margin-bottom: 12px;
`;
const Boards = styled(Lines)`
  display: grid;
  grid-auto-rows: 1fr;
  height: 406px;
`;
const Net = styled(Lines)`
  height: 175px;
  padding-top: 18px;
  font-size: 17px;
`;
const SideHead = styled.h3<{ $h: number }>`
  height: ${(p) => p.$h}px;
  margin: 0 0 0 -2px;
  padding-left: 6px;
  border-top: 2px solid ${LINE};
  background: #200606;
  font-weight: 400;
  font-size: 19px;
  line-height: ${(p) => p.$h - 2}px;
`;
const SortHead = styled.button`
  display: flex;
  align-items: center;
  width: 60px;
  height: 33px;
  margin-bottom: 4px;
  background: #1a1a1a;
`;
const Ticks = styled(Lines)`
  padding-left: 3px;
`;

const FLOWS: [string, string][] = [["主力流入", GRAY], ["12350", RED], ["主力流出", GRAY], ["11043", GREEN], ["主力净额", GRAY], ["13065", RED], ["主力持仓", GRAY], ["点击查看", "#00e0ff"]];
const BOARDS = ["足球概念", "租售同权", "综合", "自由贸易", "自动化设备", "装配式", "转基因", "专用设备", "专精特新", "注册制"];
const TICKS = "rrrgrggrgg";

const SideColumn = () => (
  <Side>
    <SideTitle>自动化</SideTitle>
    <Flow $h={23}>
      <FlowHead>资金分析</FlowHead>
      {FLOWS.map(([t, c]) => (
        <Lines key={t} $h={23} $c={c}>{t}</Lines>
      ))}
    </Flow>
    <Net $h={36}>
      {["净特大单", "净大单", "净中单", "净小单"].map((t) => <div key={t}>{t}</div>)}
    </Net>
    <SideHead $h={28}>资金排行</SideHead>
    <SortHead>
      名称
      <svg width="16" height="20" viewBox="0 0 16 20"><path d="M5 2h6v8h5l-8 9-8-9h5z" fill={GRAY} /></svg>
    </SortHead>
    <Boards $h={40} $c={CREAM}>
      {BOARDS.map((b) => <div key={b}>{b}</div>)}
    </Boards>
    <SideHead $h={31}>短线精灵</SideHead>
    <Ticks $h={24}>
      {[...TICKS].map((t, i) => (
        <Lines key={i} $h={24} $c={t === "r" ? RED : GREEN}>15:00</Lines>
      ))}
    </Ticks>
  </Side>
);

/* ---------- floating intraday window ---------- */

const Win = styled.section`
  position: absolute;
  top: 60px;
  bottom: 27px;
  left: 258px;
  right: 619px;
  display: flex;
  flex-direction: column;
  border: 1px solid #282828;
  background: #000;
`;
const TitleBar = styled.header`
  display: flex;
  align-items: center;
  flex: none;
  height: 44px;
  padding-left: 11px;
  background: #fff;
  color: #000;
`;
const Title = styled.h1`
  margin: 0 29px 0 6px;
  font-size: 19px;
  font-weight: 400;
`;
const WinButtons = styled.div`
  display: flex;
  align-self: stretch;
  margin-left: auto;
`;
const WinButton = styled.button`
  display: grid;
  place-items: center;
  width: 70px;
`;
const Grid = styled.div`
  flex: 1;
  min-height: 0;
  display: grid;
  grid-template-columns: 96px minmax(0, 1fr) 76px;
  grid-template-rows: 29px 528fr 176fr 28px 226fr 20px;
`;
const Cell = styled.div<{ $col?: number; $row: number }>`
  position: relative;
  grid-column: ${(p) => p.$col ?? 2};
  grid-row: ${(p) => p.$row};
  min-width: 0;
  min-height: 0;
  display: flex;
`;
const WinInfo = styled(Cell)`
  align-items: center;
  gap: 7px;
  font-size: 19px;
  border-left: 1px solid ${LINE};
  white-space: nowrap;
`;
const Replay = styled.div`
  display: flex;
  align-self: stretch;
  margin-left: auto;
  border-left: 2px solid ${LINE};
`;
const Scale = styled(Cell)<{ $t: number; $b: number }>`
  flex-direction: column;
  justify-content: space-between;
  margin: ${(p) => p.$t}px 0 ${(p) => p.$b}px;
  line-height: 24px;
  ${(p) => (p.$col === 1 ? "align-items: flex-end; padding-right: 2px; font-size: 17px;" : "padding-left: 2px; font-size: 19px;")}
`;
const Themes = styled.div`
  position: absolute;
  top: 359px;
  left: 115px;
  right: 34px;
  overflow: hidden;
  color: #00c0c0;
  font-size: 20px;
  line-height: 28px;
  white-space: nowrap;
  p { margin: 0 0 26px; }
`;
const Sector = styled.p`
  && { margin: 44px 0 0; }
  color: #ff0;
`;
const Times = styled.div`
  position: absolute;
  left: 0;
  right: 0;
  top: 218px;
  display: grid;
  grid-template-columns: minmax(0, 69fr) minmax(0, 487fr) minmax(0, 464fr) minmax(0, 55fr);
  color: ${RED};
  font-size: 19px;
  white-space: nowrap;
  span:first-child { margin-left: -47px; }
`;
const WinTabs = styled.div`
  display: flex;
  flex: none;
  height: 27px;
  border-bottom: 2px solid ${LINE};
  font-size: 19px;
`;
const WinTab = styled.button<{ $w: number; $on?: boolean }>`
  flex: none;
  width: ${(p) => p.$w}px;
  border-top: 2px solid ${LINE};
  border-right: 2px solid ${LINE};
  line-height: 22px;
  ${(p) => p.$on && `background: ${LINE}; color: #fff;`}
`;
const LowerTabs = styled(WinTabs)`
  border-bottom-width: 1px;
`;

const Window = () => (
  <Win aria-label="分时窗口">
    <TitleBar>
      <svg width="23" height="18" viewBox="0 0 23 18">
        <rect x=".5" y=".5" width="22" height="17" rx="1" fill="#f0f0f0" stroke="#a8b4bc" />
        <rect x="3" y="4" width="9" height="11" fill="#3a8a90" />
        <path d="M3 4h5l-5 7z" fill="#3878b0" />
        <rect x="14" y="4" width="3" height="11" fill="#fff" />
        <rect x="19" y="4" width="2" height="7" fill="#58a088" />
      </svg>
      <Title>罗博特科(300757) 2025-08-29 星期五</Title>
      <span>左右方向键切换分时</span>
      <WinButtons>
        <WinButton aria-label="最小化"><svg width="15" height="15"><path d="M0 7.5h15" stroke="#000" /></svg></WinButton>
        <WinButton aria-label="最大化"><svg width="15" height="15"><rect x=".5" y=".5" width="14" height="14" fill="none" stroke="#000" /></svg></WinButton>
        <WinButton aria-label="关闭"><svg width="15" height="15"><path d="M0 0l15 15M15 0L0 15" stroke="#000" strokeWidth="1.2" /></svg></WinButton>
      </WinButtons>
    </TitleBar>
    <Grid>
      <WinInfo $row={1}>
        <Ink $c={CREAM}>分时</Ink>
        <Ink $c="#fff">最新: 262.85</Ink>
        <Ink $c={CREAM}>领先: 270.69</Ink>
        <Replay>
          <Tool $w={87}>历史重现</Tool>
          <Tool $w={28}>竞</Tool>
          <Tool $w={29} aria-label="跳到开头">
            <svg width="22" height="20" viewBox="0 0 22 20"><path d="M1 1h3v18H1zM5 10l8-8v5h9v6h-9v5z" fill={GRAY} /></svg>
          </Tool>
        </Replay>
      </WinInfo>
      <Scale $col={1} $row={2} $t={-12} $b={-12}>
        {PRICES.map((v, i) => <Ink key={v} $c={tone(i)}>{v}</Ink>)}
      </Scale>
      <Cell $row={2}>
        <PriceChart />
        <Themes>
          <p>概念：股权转让(并购重组) 光纤概念 新型工业化 BC电池 融资融券 商业航天 量子科技 光伏概念 华为海思</p>
          <p>新能源汽车 苹果概念 芯片概念 TOPCON电池 富士康概念 华为概念 共封装光学(CPO)</p>
          <Sector>行业：自动化设备__其他自动化设备__江苏</Sector>
        </Themes>
      </Cell>
      <Scale $col={3} $row={2} $t={-10} $b={-13}>
        {PERCENTS.map((v, i) => <Ink key={i} $c={tone(i)}>{v}</Ink>)}
      </Scale>
      <Scale $col={1} $row={3} $t={32} $b={-12}>
        {["2832", "1888", "944", "0"].map((v) => <Ink key={v} $c="#808890">{v}</Ink>)}
      </Scale>
      <Cell $row={3}><VolumeChart /></Cell>
      <WinInfo $row={4}>
        <Ink $c="#fff">MACDFS(12,26,9) DIFF: -0.026<Arrow up={false} /></Ink>
        <Ink $c="#ff0">DEA: +0.213<Arrow up={false} /></Ink>
        <Ink $c={GREEN}>MACDFS: -0.479<Arrow /></Ink>
      </WinInfo>
      <Scale $col={1} $row={5} $t={-10} $b={40}>
        {["+1.22", "+0.111", "-1.03", "-2.18", "-3.28"].map((v, i) => <Ink key={v} $c={i < 2 ? RED : GREEN}>{v}</Ink>)}
      </Scale>
      <Cell $row={5}>
        <MacdChart />
        <Times><span>09:15</span><span>09:30</span><span>11:30</span><span>14:57</span></Times>
      </Cell>
      <Scale $col={3} $row={5} $t={218} $b={-17}><Ink $c={RED}>15:00</Ink></Scale>
    </Grid>
    <WinTabs>
      <WinTab $w={51}>设置</WinTab>
      <WinTab $w={102} $on>MACDFS</WinTab>
      <WinTab $w={76}>KDJFS</WinTab>
      <WinTab $w={71}>RSIFS</WinTab>
      <WinTab $w={89}>BOLLFS</WinTab>
    </WinTabs>
    <LowerTabs>
      <WinTab $w={79}>分时量</WinTab>
      <WinTab $w={60} $on>指标</WinTab>
    </LowerTabs>
  </Win>
);

/* ---------- main ---------- */

const Down = () => (
  <svg width="12" height="12" viewBox="0 0 12 12"><path d="M0 1h12L6 11z" fill={GRAY} /></svg>
);

const MENU_A = ["卖出", "模拟", "学投资", "自选", "F10", "周期", "画线", "多窗", "社区", "选股"];
const CHIPS_A = ["研报", "预测", "资金", "两融"];
const MENU_B = ["热点", "掘金", "龙虎", "新股", "数据", "全球"];
const CHIPS_B = ["个股", "股指", "基金", "期货", "期权", "美股"];
const RIGHT_TOOLS: [string, number, boolean][] = [
  ["发", 28, false], ["PK", 28, true], ["简", 29, true], ["九转", 46, true], ["连板", 48, true], ["事件", 47, true], ["", 24, false],
  ["加自选", 63, false], ["均线", 46, false], ["复权", 47, false], ["叠", 28, false], ["窗", 29, false], ["预测", 46, false], ["更多", 47, false],
];

export default function App() {
  return (
    <Shell>
      <Global />
      <MenuBar>
        {MENU_A.map((m) => <MenuItem key={m}>{m}</MenuItem>)}
        <ChipGroup>{CHIPS_A.map((m) => <MenuChip key={m}>{m}</MenuChip>)}</ChipGroup>
        {MENU_B.map((m) => <MenuItem key={m}>{m}</MenuItem>)}
        <ChipGroup>{CHIPS_B.map((m) => <MenuChip key={m}>{m}</MenuChip>)}</ChipGroup>
        <MenuItem>自定</MenuItem>
        <MenuItem>默认</MenuItem>
      </MenuBar>
      <Desk>
        <Main>
          <ToolRow>
            <ToolGroup>
              <FirstTool $w={28}>5分</FirstTool>
              <Tool $w={53}>15分</Tool>
              <Tool $w={53}>30分</Tool>
              <Tool $w={53}>60分</Tool>
              <Tool $w={74}>30s <Down /></Tool>
              <Tool $w={69}>多周期</Tool>
              <Tool $w={51}>设置</Tool>
            </ToolGroup>
            <RightTools>
              {RIGHT_TOOLS.map(([t, w, hot]) => (
                <Tool key={t} $w={w} $hot={hot} aria-label={t || "展开"}>{t || <Down />}</Tool>
              ))}
              <Tool $w={28} aria-label="跳到末尾">
                <svg width="22" height="20" viewBox="0 0 22 20"><path d="M21 1h-3v18h3zM17 10L9 2v5H0v6h9v5z" fill={GRAY} /></svg>
              </Tool>
              <Tool $w={24} aria-label="更多工具"><Down /></Tool>
            </RightTools>
          </ToolRow>
          <div />
          <InfoRow $edge>
            <Ink $c="#ff0">0: 237.98<Arrow /></Ink>
            <Ink $c="#ff80ff">MA20: 209.66<Arrow /></Ink>
            <Ink $c={GREEN}>MA</Ink>
            <ChartTools>
              <IconButton aria-label="平移">
                <svg width="20" height="22" viewBox="0 0 20 22" fill="none" stroke={GRAY} strokeWidth="1.6"><path d="M5 13V5a1.5 1.5 0 0 1 3 0v6V3a1.5 1.5 0 0 1 3 0v8V3a1.5 1.5 0 0 1 3 0v8V6a1.5 1.5 0 0 1 3 0v9c0 4-2 6-6 6-4 0-6-2-9-7 0-2 2-2 3 0" /></svg>
              </IconButton>
              <IconButton aria-label="锁定">
                <svg width="18" height="22" viewBox="0 0 18 22" fill="none" stroke={GRAY} strokeWidth="1.8"><path d="M2 8h14v12H2zM5 8V5a4 4 0 0 1 8 0v1" /></svg>
              </IconButton>
              <IconButton aria-label="放大">
                <svg width="21" height="21" viewBox="0 0 21 21" fill="none" stroke={GRAY} strokeWidth="1.8"><circle cx="10.5" cy="10.5" r="9" /><path d="M5.5 10.5h10M10.5 5.5v10" /></svg>
              </IconButton>
              <IconButton aria-label="缩小">
                <svg width="21" height="21" viewBox="0 0 21 21" fill="none" stroke={GRAY} strokeWidth="1.8"><circle cx="10.5" cy="10.5" r="9" /><path d="M5.5 10.5h10" /></svg>
              </IconButton>
            </ChartTools>
          </InfoRow>
          <div />
          <Pane>
            <DailyPrice />
            <LastPrice>230.7</LastPrice>
            <Badges><Badge>榜</Badge><span>q</span></Badges>
          </Pane>
          <PriceAxis>
            <AxisStep $h={130}>315.75</AxisStep>
            <AxisStep $h={130}><PriceTag>273.10</PriceTag></AxisStep>
            <AxisStep $h={129}>225.03</AxisStep>
            <AxisStep $h={24}>179.94</AxisStep>
          </PriceAxis>
          <InfoRow $top $edge>
            <Ink $c="#fff">OL10: 12.02万<Arrow /></Ink>
          </InfoRow>
          <InfoRow $top />
          <Pane><DailyVolume /></Pane>
          <VolAxis>
            <AxisStep $h={61}>2095</AxisStep>
            <AxisStep $h={62}>1402</AxisStep>
            <AxisStep $h={24}>710</AxisStep>
            <Unit>X100</Unit>
          </VolAxis>
          <TabRow $wide>
            <FirstTab $w={46}>交量</FirstTab>
            <Tab $w={59}>金额</Tab>
            <Tab $w={97}>沪深金额</Tab>
            <Tab $w={97}>沪深京额</Tab>
          </TabRow>
          <InfoRow $edge>
            <Ink $c="#fff">25.73<Arrow /></Ink>
            <Ink $c="#ff0">DEA: +19.43<Arrow /></Ink>
            <Explain>指标说明</Explain>
          </InfoRow>
          <div />
          <Pane><DailyMacd /></Pane>
          <MacdAxis>
            <AxisStep $h={13}>+25.73</AxisStep>
            <AxisStep $h={88}>+22.67</AxisStep>
            <AxisStep $h={13}>+0</AxisStep>
          </MacdAxis>
          <DateRow>
            <DateTag>2025-08-29,五 至今涨</DateTag>
            <DateMask />
          </DateRow>
          <div />
          <TabRow $wide $heavy>
            <Tab $w={51}>KDJ</Tab>
            <Tab $w={50}>RSI</Tab>
            <Tab $w={68}>BOLL</Tab>
            <Tab $w={59}>主力</Tab>
            <Tab $w={59}>竞价</Tab>
            <TabTail>
              <Tab $w={59}>金额</Tab>
              <Tab $w={60}>金额</Tab>
            </TabTail>
          </TabRow>
          <TabRow $wide>
            <FirstTab $w={31}>雷</FirstTab>
            <Tab $w={206}>行业资讯[自动化设备]</Tab>
            <Tab $w={59}>社区</Tab>
            <Download aria-label="下载">
              <svg width="18" height="19" viewBox="0 0 18 19"><path d="M6 0h6v7h5l-8 8-8-8h5zM0 16h18v3H0z" fill={GRAY} /></svg>
            </Download>
          </TabRow>
          <News>
            <NewsList $w={653}>
              <span>”</span>
              <NewsDate>12-31</NewsDate>
            </NewsList>
            <ScrollBar />
            <NewsList>
              <NewsKind><span>[</span><span>公告</span><span>]</span></NewsKind>
              <NewsLink href="#news">罗博特科：300757罗博特科投资者关系管理信息20251225</NewsLink>
              <NewsDate>12-25</NewsDate>
            </NewsList>
            <ScrollBar />
          </News>
        </Main>
        <ChipPanel />
        <SideColumn />
      </Desk>
      <Window />
    </Shell>
  );
}
